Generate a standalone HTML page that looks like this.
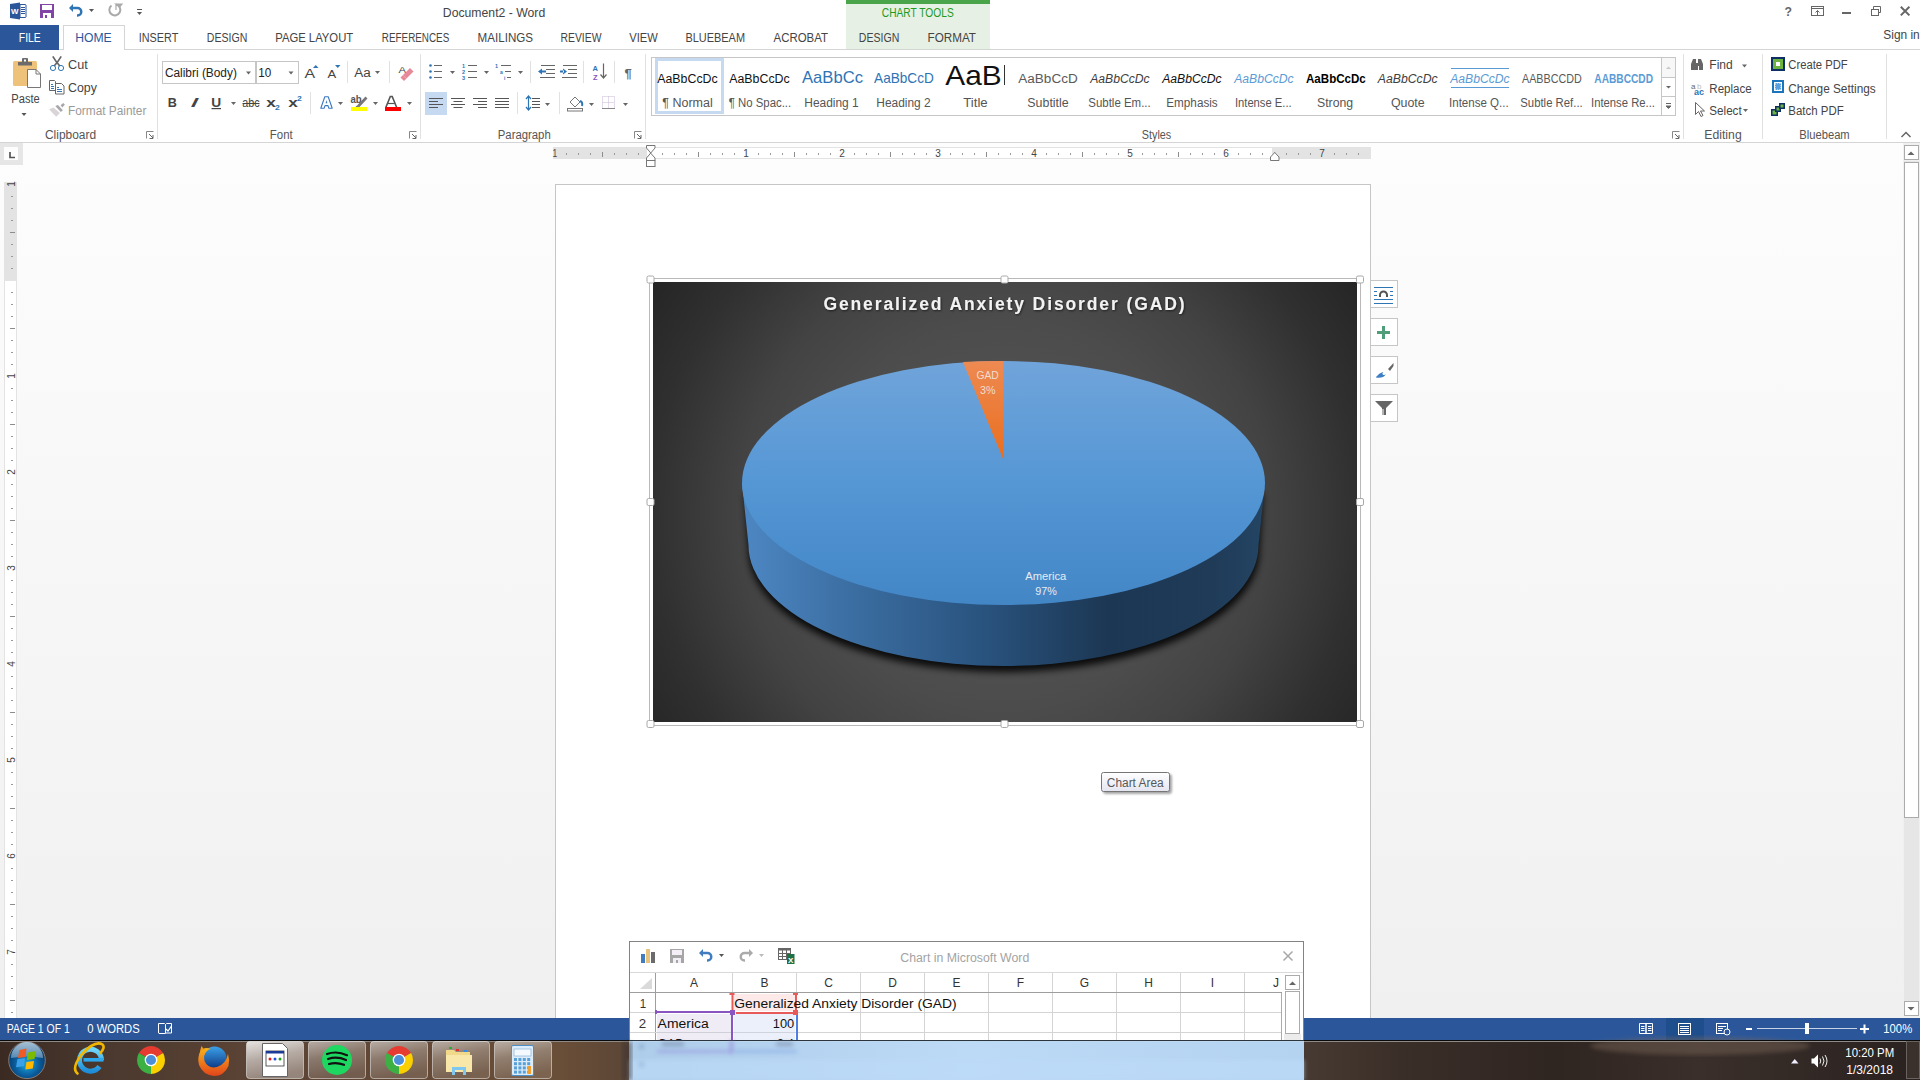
<!DOCTYPE html>
<html><head><meta charset="utf-8">
<style>
*{margin:0;padding:0;box-sizing:border-box}
html,body{width:1920px;height:1080px;overflow:hidden;background:#fff}
body{position:relative;font-family:"Liberation Sans",sans-serif}
.L{position:absolute;left:0;top:0}
text{font-family:"Liberation Sans",sans-serif;white-space:pre}
</style></head><body>

<svg class="L" style="z-index:1" width="1920" height="1080" viewBox="0 0 1920 1080"><rect x="0" y="0" width="1920" height="1080" fill="#ffffff" /><defs><linearGradient id="docbg" x1="0" y1="0" x2="0" y2="1"><stop offset="0" stop-color="#fdfdfd"/><stop offset="1" stop-color="#f0f0f0"/></linearGradient></defs><rect x="0" y="143" width="1920" height="875" fill="url(#docbg)" /><rect x="846" y="0" width="144" height="4" fill="#4aa54a" /><rect x="846" y="4" width="144" height="45" fill="#e6f0e4" /><rect x="0" y="49" width="1920" height="1" fill="#d5d5d5" /><rect x="0" y="25" width="59" height="25" fill="#2b579a" /><rect x="63" y="25" width="62" height="25" fill="#ffffff" /><rect x="63" y="25" width="1" height="25" fill="#d5d5d5" /><rect x="124" y="25" width="1" height="25" fill="#d5d5d5" /><rect x="63" y="25" width="62" height="1" fill="#d5d5d5" /><rect x="0" y="142" width="1920" height="1" fill="#d5d5d5" /><rect x="157" y="54" width="1" height="85" fill="#e1e1e1" /><rect x="420" y="54" width="1" height="85" fill="#e1e1e1" /><rect x="645" y="54" width="1" height="85" fill="#e1e1e1" /><rect x="1683" y="54" width="1" height="85" fill="#e1e1e1" /><rect x="1762" y="54" width="1" height="85" fill="#e1e1e1" /><rect x="1886" y="54" width="1" height="85" fill="#e1e1e1" /><text x="442.8" y="17" textLength="102.4" lengthAdjust="spacingAndGlyphs" font-size="12" fill="#444" font-weight="400" font-style="normal" >Document2 - Word</text><text x="18.8" y="41.5" textLength="22.0" lengthAdjust="spacingAndGlyphs" font-size="12.5" fill="#ffffff" font-weight="400" font-style="normal" >FILE</text><text x="75.2" y="41.5" textLength="36.5" lengthAdjust="spacingAndGlyphs" font-size="12.5" fill="#2b579a" font-weight="400" font-style="normal" >HOME</text><text x="138.8" y="41.5" textLength="39.5" lengthAdjust="spacingAndGlyphs" font-size="12.5" fill="#444" font-weight="400" font-style="normal" >INSERT</text><text x="206.8" y="41.5" textLength="40.5" lengthAdjust="spacingAndGlyphs" font-size="12.5" fill="#444" font-weight="400" font-style="normal" >DESIGN</text><text x="275.2" y="41.5" textLength="78.0" lengthAdjust="spacingAndGlyphs" font-size="12.5" fill="#444" font-weight="400" font-style="normal" >PAGE LAYOUT</text><text x="381.8" y="41.5" textLength="67.5" lengthAdjust="spacingAndGlyphs" font-size="12.5" fill="#444" font-weight="400" font-style="normal" >REFERENCES</text><text x="477.6" y="41.5" textLength="55.5" lengthAdjust="spacingAndGlyphs" font-size="12.5" fill="#444" font-weight="400" font-style="normal" >MAILINGS</text><text x="560.5" y="41.5" textLength="41.0" lengthAdjust="spacingAndGlyphs" font-size="12.5" fill="#444" font-weight="400" font-style="normal" >REVIEW</text><text x="629.2" y="41.5" textLength="28.5" lengthAdjust="spacingAndGlyphs" font-size="12.5" fill="#444" font-weight="400" font-style="normal" >VIEW</text><text x="685.5" y="41.5" textLength="59.5" lengthAdjust="spacingAndGlyphs" font-size="12.5" fill="#444" font-weight="400" font-style="normal" >BLUEBEAM</text><text x="773.5" y="41.5" textLength="54.5" lengthAdjust="spacingAndGlyphs" font-size="12.5" fill="#444" font-weight="400" font-style="normal" >ACROBAT</text><text x="858.8" y="41.5" textLength="40.5" lengthAdjust="spacingAndGlyphs" font-size="12.5" fill="#444" font-weight="400" font-style="normal" >DESIGN</text><text x="927.5" y="41.5" textLength="48.5" lengthAdjust="spacingAndGlyphs" font-size="12.5" fill="#444" font-weight="400" font-style="normal" >FORMAT</text><text x="881.8" y="17.3" textLength="71.9" lengthAdjust="spacingAndGlyphs" font-size="12" fill="#1f9a1f" font-weight="400" font-style="normal" >CHART TOOLS</text><text x="1883.3" y="38.5" textLength="36.4" lengthAdjust="spacingAndGlyphs" font-size="12" fill="#444" font-weight="400" font-style="normal" >Sign in</text></svg>
<svg class="L" style="z-index:2" width="1920" height="1080" viewBox="0 0 1920 1080"><path d="M20 4.5h5.5l0.5 0.5v12l-0.5 0.5h-5.5z" fill="#fff" stroke="#2b579a" stroke-width="1"/><path d="M21 7.5h4M21 9.5h4M21 11.5h4M21 13.5h4" stroke="#2b579a" stroke-width="1"/><path d="M10 4l10-1.5v17l-10-1.5z" fill="#2b579a"/><text x="11" y="14" font-size="7" font-weight="700" fill="#fff" textLength="7.5" lengthAdjust="spacingAndGlyphs">W</text><path d="M40 4h14v14h-14z" fill="#8344a8"/><rect x="42" y="5" width="10" height="5" fill="#fff"/><rect x="43" y="13" width="8" height="5" fill="#fff"/><rect x="45" y="15" width="2" height="3" fill="#8344a8"/><path d="M69 8l4-4v2.7h4.5a5 5 0 0 1 0 10h-0.5v-2.5h0.5a2.5 2.5 0 0 0 0-5h-4.5v2.8z" fill="#2e75b6"/><path d="M89 9h5l-2.5 3z" fill="#555"/><path d="M111.5 5.5a5.5 5.5 0 1 0 4.5-1" fill="none" stroke="#aaa" stroke-width="2"/><path d="M116 4h6l-2 2.5z M116 4v6" fill="#aaa" stroke="#aaa" stroke-width="1.2"/><path d="M137 9.5h5" stroke="#555" stroke-width="1"/><path d="M137 12h5l-2.5 3z" fill="#555"/><text x="1784.5" y="15.8" font-size="13" font-weight="700" fill="#666" textLength="7.5" lengthAdjust="spacingAndGlyphs">?</text><rect x="1811.5" y="6.5" width="12" height="9" fill="none" stroke="#666"/><path d="M1812 8.5h11" stroke="#666"/><path d="M1817.5 15v-4.5M1815.5 12.5l2-2 2 2" fill="none" stroke="#666"/><rect x="1842" y="12" width="9" height="2" fill="#666"/><rect x="1871.5" y="9.5" width="7" height="6" fill="none" stroke="#666"/><path d="M1873.5 9.5v-3h7v6h-2" fill="none" stroke="#666"/><path d="M1900.8 6.8l8.6 8.6M1909.4 6.8l-8.6 8.6" stroke="#666" stroke-width="2"/></svg>
<svg class="L" style="z-index:2" width="1920" height="1080" viewBox="0 0 1920 1080"><rect x="13" y="61" width="24" height="25" rx="1.5" fill="#eec27b"/><path d="M18 62h14v3.5h-14z" fill="#6b6b6b"/><rect x="22" y="58" width="6" height="5" rx="1" fill="#6b6b6b"/><rect x="24" y="59.5" width="2" height="2" fill="#fff"/><path d="M27.5 69.5h8.5l4.5 4.5v13.5h-13z" fill="#fff" stroke="#777" stroke-width="1"/><path d="M36 69.5v4.5h4.5" fill="none" stroke="#777" stroke-width="1"/><text x="11.3" y="103.3" textLength="28.4" lengthAdjust="spacingAndGlyphs" font-size="12" fill="#444" font-weight="400" font-style="normal" >Paste</text><path d="M21.5 113h5l-2.5 3z" fill="#555"/><path d="M52.8 56.3Q55.5 61 59.8 66M61.2 56.3Q58.5 61 54.2 66" fill="none" stroke="#666" stroke-width="1.7"/><circle cx="53" cy="68" r="2.6" fill="none" stroke="#2e75b6" stroke-width="1"/><circle cx="61" cy="68" r="2.6" fill="none" stroke="#2e75b6" stroke-width="1"/><text x="68.0" y="69.2" textLength="19.7" lengthAdjust="spacingAndGlyphs" font-size="12" fill="#444" font-weight="400" font-style="normal" >Cut</text><path d="M49.5 80.5h5l1 1v9h-6z" fill="#fff" stroke="#666"/><path d="M55.5 83.5h6l2.5 2.5v8h-8.5z" fill="#fff" stroke="#666"/><path d="M51 84.5h2M51 86.5h3M51 88.5h3M57 87.5h2M57 89.5h5M57 91.5h5" stroke="#2e75b6" stroke-width="1"/><text x="68.0" y="91.5" textLength="28.9" lengthAdjust="spacingAndGlyphs" font-size="12" fill="#444" font-weight="400" font-style="normal" >Copy</text><path d="M49.1 109.3L53.4 107.4 59.9 113 56.2 116.7z" fill="#d8d4d8"/><path d="M55.3 105.9L57.9 105 62.9 110.2 60.8 111.9z" fill="#a8a6aa"/><path d="M60.6 105.2L63.2 103 64.9 104.6 62.3 107.4z" fill="#a8a6aa"/><text x="68.0" y="114.9" textLength="78.4" lengthAdjust="spacingAndGlyphs" font-size="12" fill="#9a9a9a" font-weight="400" font-style="normal" >Format Painter</text><text x="45.0" y="138.5" textLength="51.1" lengthAdjust="spacingAndGlyphs" font-size="12" fill="#555" font-weight="400" font-style="normal" >Clipboard</text><path d="M146.5 138.5v-7h7" fill="none" stroke="#888" stroke-width="1"/><path d="M149 134l4 4M153 135v3.5h-3.5" fill="none" stroke="#666" stroke-width="1"/><path d="M409.5 138.5v-7h7" fill="none" stroke="#888" stroke-width="1"/><path d="M412 134l4 4M416 135v3.5h-3.5" fill="none" stroke="#666" stroke-width="1"/><path d="M634.5 138.5v-7h7" fill="none" stroke="#888" stroke-width="1"/><path d="M637 134l4 4M641 135v3.5h-3.5" fill="none" stroke="#666" stroke-width="1"/><path d="M1672.5 138.5v-7h7" fill="none" stroke="#888" stroke-width="1"/><path d="M1675 134l4 4M1679 135v3.5h-3.5" fill="none" stroke="#666" stroke-width="1"/><rect x="162.5" y="61.5" width="93" height="22" fill="#fff" stroke="#c6c6c6"/><rect x="256.5" y="61.5" width="42" height="22" fill="#fff" stroke="#c6c6c6"/><text x="164.9" y="77" textLength="72.0" lengthAdjust="spacingAndGlyphs" font-size="12.5" fill="#222" font-weight="400" font-style="normal" >Calibri (Body)</text><path d="M246 71.5h5l-2.5 3z" fill="#666"/><text x="258.2" y="77" textLength="13.0" lengthAdjust="spacingAndGlyphs" font-size="12.5" fill="#222" font-weight="400" font-style="normal" >10</text><path d="M288.5 71.5h5l-2.5 3z" fill="#666"/><text x="304.6" y="77.8" textLength="10.6" lengthAdjust="spacingAndGlyphs" font-size="13" fill="#444" font-weight="400" font-style="normal" >A</text><path d="M313 68h5.5l-2.75-3z" fill="#2e75b6"/><text x="327.6" y="77.8" textLength="8.7" lengthAdjust="spacingAndGlyphs" font-size="10.5" fill="#444" font-weight="400" font-style="normal" >A</text><path d="M335 65h5.5l-2.75 3z" fill="#2e75b6"/><rect x="347" y="61" width="1" height="22" fill="#e1e1e1" /><text x="354.2" y="76.5" textLength="16.5" lengthAdjust="spacingAndGlyphs" font-size="12.5" fill="#444" font-weight="400" font-style="normal" >Aa</text><path d="M375 71h5l-2.5 3z" fill="#666"/><rect x="389" y="61" width="1" height="22" fill="#e1e1e1" /><text x="398.5" y="72.5" textLength="7.6" lengthAdjust="spacingAndGlyphs" font-size="9" fill="#444" font-weight="400" font-style="normal" >A</text><path d="M403 75l7-7 3.5 3.5-7 7z" fill="#e8899b"/><path d="M400.5 77.5l2.5-2.5 3.5 3.5-2.5 2.5z" fill="#e8899b"/><text x="167.8" y="107.1" textLength="9.1" lengthAdjust="spacingAndGlyphs" font-size="12.5" fill="#444" font-weight="700" font-style="normal" >B</text><text x="189.8" y="107.1" textLength="9.5" lengthAdjust="spacingAndGlyphs" font-size="12.5" fill="#444" font-weight="400" font-style="italic" font-family="Liberation Serif">I</text><text x="211.3" y="107" textLength="9.9" lengthAdjust="spacingAndGlyphs" font-size="12" fill="#444" font-weight="700" font-style="normal" >U</text><rect x="211.5" y="108" width="9.5" height="1.2" fill="#444" /><path d="M231 102h5l-2.5 3z" fill="#666"/><text x="242.3" y="107" textLength="17.4" lengthAdjust="spacingAndGlyphs" font-size="12" fill="#444" font-weight="400" font-style="normal" >abc</text><rect x="242.5" y="103" width="17" height="1" fill="#444" /><text x="266.2" y="107" textLength="9.6" lengthAdjust="spacingAndGlyphs" font-size="13" fill="#444" font-weight="700" font-style="normal" >x</text><text x="275.1" y="109.5" textLength="4.8" lengthAdjust="spacingAndGlyphs" font-size="7" fill="#2e75b6" font-weight="700" font-style="normal" >2</text><text x="288.2" y="107" textLength="9.6" lengthAdjust="spacingAndGlyphs" font-size="13" fill="#444" font-weight="700" font-style="normal" >x</text><text x="297.1" y="100.5" textLength="4.8" lengthAdjust="spacingAndGlyphs" font-size="7" fill="#2e75b6" font-weight="700" font-style="normal" >2</text><rect x="310" y="92" width="1" height="22" fill="#e1e1e1" /><path d="M320.8 108.3L324.8 96.8H328.2L332.2 108.3H328.9L328 105.6H325L324.1 108.3Z" fill="#fff" stroke="#3a78c0" stroke-width="1.1" stroke-linejoin="round"/><path d="M325.6 103.2L326.5 100L327.4 103.2Z" fill="#3a78c0"/><path d="M338 102h5l-2.5 3z" fill="#666"/><text x="350.4" y="102.5" textLength="11.2" lengthAdjust="spacingAndGlyphs" font-size="10" fill="#555" font-weight="700" font-style="normal" >ab</text><path d="M357 105.5l8.5-9 2 2-8.5 9z" fill="#777"/><path d="M355.5 107l1.5-1.5 2 2-1.5 0.5z" fill="#666"/><rect x="351" y="107" width="16" height="4" fill="#ffff00" /><path d="M373 102h5l-2.5 3z" fill="#666"/><path d="M385.8 107.5L390.3 96.5H392.2L396.7 107.5" fill="none" stroke="#555" stroke-width="1.6"/><path d="M387.8 103.5h7" stroke="#555" stroke-width="1.2"/><rect x="385" y="107" width="16" height="4" fill="#ff0000" /><path d="M407 102h5l-2.5 3z" fill="#666"/><text x="269.8" y="138.5" textLength="22.9" lengthAdjust="spacingAndGlyphs" font-size="12" fill="#555" font-weight="400" font-style="normal" >Font</text><circle cx="430.5" cy="65.5" r="1.3" fill="#2e75b6"/><circle cx="430.5" cy="71.5" r="1.3" fill="#2e75b6"/><circle cx="430.5" cy="77.5" r="1.3" fill="#2e75b6"/><path d="M434 65.5h8M434 71.5h8M434 77.5h8" stroke="#666" stroke-width="1"/><path d="M450 71h5l-2.5 3z" fill="#666"/><text x="462" y="68" font-size="5.5" fill="#2e75b6" font-weight="700">1</text><text x="462" y="74" font-size="5.5" fill="#2e75b6" font-weight="700">2</text><text x="462" y="80" font-size="5.5" fill="#2e75b6" font-weight="700">3</text><path d="M468 65.5h9M468 71.5h9M468 77.5h9" stroke="#666" stroke-width="1"/><path d="M484 71h5l-2.5 3z" fill="#666"/><text x="495" y="68" font-size="5.5" fill="#2e75b6" font-weight="700">1</text><text x="500" y="74" font-size="5" fill="#2e75b6" font-weight="700">a</text><text x="504" y="80" font-size="5" fill="#2e75b6" font-weight="700">i</text><path d="M501 65.5h10M505 71.5h6M507 77.5h4" stroke="#666" stroke-width="1"/><path d="M518 71h5l-2.5 3z" fill="#666"/><rect x="530" y="61" width="1" height="22" fill="#e1e1e1" /><path d="M541 65.5h14M546 69.5h9M546 73.5h9M540 77.5h15" stroke="#666" stroke-width="1"/><path d="M538 71.5l4-3v6z M541 70.5h5v2h-5z" fill="#2e75b6"/><path d="M563 65.5h14M568 69.5h9M568 73.5h9M562 77.5h15" stroke="#666" stroke-width="1"/><path d="M567 71.5l-4-3v6z M560 70.5h4v2h-4z" fill="#2e75b6"/><rect x="583" y="61" width="1" height="22" fill="#e1e1e1" /><text x="592.5" y="71" font-size="7.5" fill="#2e75b6" font-weight="700">A</text><text x="593" y="79.5" font-size="7.5" fill="#8855bb" font-weight="700">Z</text><path d="M603.5 63.5v14M600.5 74.5l3 3.5 3-3.5" stroke="#666" stroke-width="1.2" fill="none"/><rect x="614" y="61" width="1" height="22" fill="#e1e1e1" /><text x="624.5" y="78" font-size="13" fill="#666" font-weight="700">¶</text><rect x="425" y="92" width="22" height="23" fill="#c5d9f1" /><rect x="429" y="98" width="14" height="1" fill="#555"/><rect x="429" y="101" width="9" height="1" fill="#555"/><rect x="429" y="104" width="14" height="1" fill="#555"/><rect x="429" y="107" width="9" height="1" fill="#555"/><rect x="451" y="98" width="14" height="1" fill="#555"/><rect x="453.5" y="101" width="9" height="1" fill="#555"/><rect x="451" y="104" width="14" height="1" fill="#555"/><rect x="453.5" y="107" width="9" height="1" fill="#555"/><rect x="473" y="98" width="14" height="1" fill="#555"/><rect x="478" y="101" width="9" height="1" fill="#555"/><rect x="473" y="104" width="14" height="1" fill="#555"/><rect x="478" y="107" width="9" height="1" fill="#555"/><rect x="495" y="98" width="14" height="1" fill="#555"/><rect x="495" y="101" width="14" height="1" fill="#555"/><rect x="495" y="104" width="14" height="1" fill="#555"/><rect x="495" y="107" width="14" height="1" fill="#555"/><rect x="517" y="92" width="1" height="22" fill="#e1e1e1" /><path d="M528.5 97v12M526 99l2.5-3 2.5 3M526 107l2.5 3 2.5-3" stroke="#2e75b6" stroke-width="1.2" fill="none"/><rect x="532" y="98" width="8" height="1" fill="#555"/><rect x="532" y="101" width="8" height="1" fill="#555"/><rect x="532" y="104" width="8" height="1" fill="#555"/><rect x="532" y="107" width="8" height="1" fill="#555"/><path d="M545 103h5l-2.5 3z" fill="#666"/><rect x="559" y="92" width="1" height="22" fill="#e1e1e1" /><path d="M570 102l5-5 5 5-5 5z" fill="#fff" stroke="#777"/><rect x="567.5" y="108.5" width="15" height="2.5" fill="#fff" stroke="#777"/><path d="M580 101q3 1 2 5" stroke="#2e75b6" stroke-width="2" fill="none"/><path d="M589 103h5l-2.5 3z" fill="#666"/><rect x="602.5" y="96.5" width="12" height="12" fill="none" stroke="#c8b8d8" stroke-dasharray="1 1"/><path d="M602.5 102.5h12M608.5 96.5v12" stroke="#c8b8d8" stroke-dasharray="1 1"/><path d="M602 108.5h13" stroke="#888"/><path d="M623 103h5l-2.5 3z" fill="#666"/><text x="497.8" y="138.5" textLength="52.9" lengthAdjust="spacingAndGlyphs" font-size="12" fill="#555" font-weight="400" font-style="normal" >Paragraph</text><rect x="651.5" y="57.5" width="1024" height="58" fill="#fff" stroke="#c6c6c6"/><rect x="656.5" y="59.5" width="66" height="53" fill="none" stroke="#c5d9f1" stroke-width="3"/><rect x="1661" y="57" width="1" height="58" fill="#c6c6c6" /><rect x="1661" y="77" width="15" height="1" fill="#c6c6c6" /><rect x="1661" y="96" width="15" height="1" fill="#c6c6c6" /><rect x="1662" y="58" width="13" height="19" fill="#f7f7f7" /><path d="M1666 69h5l-2.5-2.5z" fill="#c8c8c8"/><path d="M1666 86h5l-2.5 2.5z" fill="#666"/><path d="M1666 103.5h5M1666 106h5l-2.5 2.5z" stroke="#666" fill="#666" stroke-width="1"/><text x="657.2" y="83.3" textLength="60.5" lengthAdjust="spacingAndGlyphs" font-size="12.5" fill="#111" font-weight="400" font-style="normal" >AaBbCcDc</text><text x="662.3" y="106.9" textLength="50.4" lengthAdjust="spacingAndGlyphs" font-size="12" fill="#555" font-weight="400" font-style="normal" >¶ Normal</text><text x="729.2" y="83.3" textLength="60.5" lengthAdjust="spacingAndGlyphs" font-size="12.5" fill="#111" font-weight="400" font-style="normal" >AaBbCcDc</text><text x="728.8" y="106.9" textLength="62.4" lengthAdjust="spacingAndGlyphs" font-size="12" fill="#555" font-weight="400" font-style="normal" >¶ No Spac...</text><text x="802.0" y="83.3" textLength="61.0" lengthAdjust="spacingAndGlyphs" font-size="17" fill="#2e74b5" font-weight="400" font-style="normal" >AaBbCc</text><text x="804.3" y="106.9" textLength="54.4" lengthAdjust="spacingAndGlyphs" font-size="12" fill="#555" font-weight="400" font-style="normal" >Heading 1</text><text x="874.1" y="83.3" textLength="59.7" lengthAdjust="spacingAndGlyphs" font-size="14.5" fill="#2e74b5" font-weight="400" font-style="normal" >AaBbCcD</text><text x="876.3" y="106.9" textLength="54.4" lengthAdjust="spacingAndGlyphs" font-size="12" fill="#555" font-weight="400" font-style="normal" >Heading 2</text><text x="945.3" y="84.7" textLength="56.4" lengthAdjust="spacingAndGlyphs" font-size="28" fill="#111" font-weight="400" font-style="normal" >AaB</text><text x="963.3" y="106.9" textLength="24.4" lengthAdjust="spacingAndGlyphs" font-size="12" fill="#555" font-weight="400" font-style="normal" >Title</text><text x="1018.3" y="83.3" textLength="59.4" lengthAdjust="spacingAndGlyphs" font-size="12" fill="#5a5a5a" font-weight="400" font-style="normal" >AaBbCcD</text><text x="1027.3" y="106.9" textLength="41.4" lengthAdjust="spacingAndGlyphs" font-size="12" fill="#555" font-weight="400" font-style="normal" >Subtitle</text><text x="1090.2" y="83.3" textLength="59.5" lengthAdjust="spacingAndGlyphs" font-size="12.5" fill="#404040" font-weight="400" font-style="italic" >AaBbCcDc</text><text x="1088.3" y="106.9" textLength="62.4" lengthAdjust="spacingAndGlyphs" font-size="12" fill="#555" font-weight="400" font-style="normal" >Subtle Em...</text><text x="1162.2" y="83.3" textLength="59.5" lengthAdjust="spacingAndGlyphs" font-size="12.5" fill="#111" font-weight="400" font-style="italic" >AaBbCcDc</text><text x="1166.3" y="106.9" textLength="51.4" lengthAdjust="spacingAndGlyphs" font-size="12" fill="#555" font-weight="400" font-style="normal" >Emphasis</text><text x="1234.2" y="83.3" textLength="59.5" lengthAdjust="spacingAndGlyphs" font-size="12.5" fill="#5b9bd5" font-weight="400" font-style="italic" >AaBbCcDc</text><text x="1234.9" y="106.9" textLength="56.8" lengthAdjust="spacingAndGlyphs" font-size="12" fill="#555" font-weight="400" font-style="normal" >Intense E...</text><text x="1306.0" y="83.3" textLength="59.8" lengthAdjust="spacingAndGlyphs" font-size="12.5" fill="#000" font-weight="700" font-style="normal" >AaBbCcDc</text><text x="1317.0" y="106.9" textLength="36.2" lengthAdjust="spacingAndGlyphs" font-size="12" fill="#555" font-weight="400" font-style="normal" >Strong</text><text x="1377.8" y="83.3" textLength="59.9" lengthAdjust="spacingAndGlyphs" font-size="12.5" fill="#404040" font-weight="400" font-style="italic" >AaBbCcDc</text><text x="1390.9" y="106.9" textLength="33.8" lengthAdjust="spacingAndGlyphs" font-size="12" fill="#555" font-weight="400" font-style="normal" >Quote</text><text x="1450.2" y="83.3" textLength="59.5" lengthAdjust="spacingAndGlyphs" font-size="12.5" fill="#5b9bd5" font-weight="400" font-style="italic" >AaBbCcDc</text><text x="1449.0" y="106.9" textLength="59.7" lengthAdjust="spacingAndGlyphs" font-size="12" fill="#555" font-weight="400" font-style="normal" >Intense Q...</text><text x="1522.0" y="83.3" textLength="59.7" lengthAdjust="spacingAndGlyphs" font-size="12" fill="#595959" font-weight="400" font-style="normal" >AABBCCDD</text><text x="1520.3" y="106.9" textLength="62.4" lengthAdjust="spacingAndGlyphs" font-size="12" fill="#555" font-weight="400" font-style="normal" >Subtle Ref...</text><text x="1594.3" y="83.3" textLength="58.7" lengthAdjust="spacingAndGlyphs" font-size="12" fill="#5b9bd5" font-weight="700" font-style="normal" >AABBCCDD</text><text x="1591.0" y="106.9" textLength="64.0" lengthAdjust="spacingAndGlyphs" font-size="12" fill="#555" font-weight="400" font-style="normal" >Intense Re...</text><rect x="1451" y="68" width="58" height="1" fill="#5b9bd5" /><rect x="1451" y="87" width="58" height="1" fill="#5b9bd5" /><rect x="1004" y="65" width="1" height="20" fill="#333" /><text x="1141.8" y="138.7" textLength="29.4" lengthAdjust="spacingAndGlyphs" font-size="12" fill="#555" font-weight="400" font-style="normal" >Styles</text><path d="M1691 70v-6l2-5h3v4h2v-4h3l2 5v6h-4v-4h-1v4z" fill="#666"/><text x="1709.3" y="69.3" textLength="23.4" lengthAdjust="spacingAndGlyphs" font-size="12" fill="#444" font-weight="400" font-style="normal" >Find</text><path d="M1742 64.5h5l-2.5 3z" fill="#666"/><text x="1691" y="89" font-size="8" fill="#666">a</text><text x="1697" y="89" font-size="8" fill="#bbb">b</text><text x="1694" y="95" font-size="9" fill="#2e75b6" font-weight="700">ac</text><text x="1709.3" y="92.5" textLength="42.4" lengthAdjust="spacingAndGlyphs" font-size="12" fill="#444" font-weight="400" font-style="normal" >Replace</text><path d="M1695.5 102.5v12l3-3 2.5 5 2-1-2.5-4.5h4z" fill="#fff" stroke="#666"/><text x="1709.3" y="115.3" textLength="32.4" lengthAdjust="spacingAndGlyphs" font-size="12" fill="#444" font-weight="400" font-style="normal" >Select</text><path d="M1743 109h5l-2.5 3z" fill="#666"/><text x="1704.3" y="138.7" textLength="37.4" lengthAdjust="spacingAndGlyphs" font-size="12" fill="#555" font-weight="400" font-style="normal" >Editing</text><rect x="1771" y="57" width="14" height="14" fill="#0e2f66"/><rect x="1773" y="59" width="10" height="10" fill="#6cb33f"/><rect x="1776" y="62" width="4" height="4" fill="#fff"/><text x="1788.3" y="69.2" textLength="59.4" lengthAdjust="spacingAndGlyphs" font-size="12" fill="#444" font-weight="400" font-style="normal" >Create PDF</text><rect x="1772" y="80" width="12" height="13" fill="#1b75bc"/><rect x="1774" y="82" width="8" height="9" fill="#fff"/><rect x="1775" y="83" width="6" height="7" fill="#5aa0e0" stroke="#fff" stroke-dasharray="1 1"/><text x="1788.3" y="92.5" textLength="87.4" lengthAdjust="spacingAndGlyphs" font-size="12" fill="#444" font-weight="400" font-style="normal" >Change Settings</text><rect x="1771" y="109" width="7" height="7" fill="#0e2f66"/><rect x="1772.5" y="110.5" width="4" height="4" fill="#6cb33f"/><rect x="1775" y="106" width="6" height="6" fill="#0e2f66"/><rect x="1776.5" y="107.5" width="3" height="3" fill="#6cb33f"/><rect x="1779" y="103" width="6" height="6" fill="#0e2f66"/><rect x="1780.5" y="104.5" width="3" height="3" fill="#6cb33f"/><text x="1788.3" y="115.2" textLength="55.4" lengthAdjust="spacingAndGlyphs" font-size="12" fill="#444" font-weight="400" font-style="normal" >Batch PDF</text><text x="1799.3" y="138.5" textLength="50.4" lengthAdjust="spacingAndGlyphs" font-size="12" fill="#555" font-weight="400" font-style="normal" >Bluebeam</text><path d="M1901.5 137l4.5-4.5 4.5 4.5" fill="none" stroke="#666" stroke-width="1.5"/></svg>
<svg class="L" style="z-index:2" width="1920" height="1080" viewBox="0 0 1920 1080"><rect x="0" y="143" width="23" height="22" fill="#e6e6e6" /><rect x="4" y="147" width="14" height="13" fill="#fdfdfd" /><path d="M10 152v5.5h5" fill="none" stroke="#555" stroke-width="1.7"/><rect x="553" y="147" width="818" height="12" fill="#e3e3e3" /><rect x="647" y="147" width="625" height="12" fill="#ffffff" /><rect x="647" y="147" width="625" height="1" fill="#e3e3e3" /><rect x="647" y="158" width="625" height="1" fill="#e3e3e3" /><rect x="566" y="153" width="1" height="2" fill="#9a9a9a" /><rect x="578" y="153" width="1" height="2" fill="#9a9a9a" /><rect x="590" y="153" width="1" height="2" fill="#9a9a9a" /><rect x="602" y="152" width="1" height="5" fill="#8c8c8c" /><rect x="614" y="153" width="1" height="2" fill="#9a9a9a" /><rect x="626" y="153" width="1" height="2" fill="#9a9a9a" /><rect x="638" y="153" width="1" height="2" fill="#9a9a9a" /><rect x="662" y="153" width="1" height="2" fill="#9a9a9a" /><rect x="674" y="153" width="1" height="2" fill="#9a9a9a" /><rect x="686" y="153" width="1" height="2" fill="#9a9a9a" /><rect x="698" y="152" width="1" height="5" fill="#8c8c8c" /><rect x="710" y="153" width="1" height="2" fill="#9a9a9a" /><rect x="722" y="153" width="1" height="2" fill="#9a9a9a" /><rect x="734" y="153" width="1" height="2" fill="#9a9a9a" /><rect x="758" y="153" width="1" height="2" fill="#9a9a9a" /><rect x="770" y="153" width="1" height="2" fill="#9a9a9a" /><rect x="782" y="153" width="1" height="2" fill="#9a9a9a" /><rect x="794" y="152" width="1" height="5" fill="#8c8c8c" /><rect x="806" y="153" width="1" height="2" fill="#9a9a9a" /><rect x="818" y="153" width="1" height="2" fill="#9a9a9a" /><rect x="830" y="153" width="1" height="2" fill="#9a9a9a" /><rect x="854" y="153" width="1" height="2" fill="#9a9a9a" /><rect x="866" y="153" width="1" height="2" fill="#9a9a9a" /><rect x="878" y="153" width="1" height="2" fill="#9a9a9a" /><rect x="890" y="152" width="1" height="5" fill="#8c8c8c" /><rect x="902" y="153" width="1" height="2" fill="#9a9a9a" /><rect x="914" y="153" width="1" height="2" fill="#9a9a9a" /><rect x="926" y="153" width="1" height="2" fill="#9a9a9a" /><rect x="950" y="153" width="1" height="2" fill="#9a9a9a" /><rect x="962" y="153" width="1" height="2" fill="#9a9a9a" /><rect x="974" y="153" width="1" height="2" fill="#9a9a9a" /><rect x="986" y="152" width="1" height="5" fill="#8c8c8c" /><rect x="998" y="153" width="1" height="2" fill="#9a9a9a" /><rect x="1010" y="153" width="1" height="2" fill="#9a9a9a" /><rect x="1022" y="153" width="1" height="2" fill="#9a9a9a" /><rect x="1046" y="153" width="1" height="2" fill="#9a9a9a" /><rect x="1058" y="153" width="1" height="2" fill="#9a9a9a" /><rect x="1070" y="153" width="1" height="2" fill="#9a9a9a" /><rect x="1082" y="152" width="1" height="5" fill="#8c8c8c" /><rect x="1094" y="153" width="1" height="2" fill="#9a9a9a" /><rect x="1106" y="153" width="1" height="2" fill="#9a9a9a" /><rect x="1118" y="153" width="1" height="2" fill="#9a9a9a" /><rect x="1142" y="153" width="1" height="2" fill="#9a9a9a" /><rect x="1154" y="153" width="1" height="2" fill="#9a9a9a" /><rect x="1166" y="153" width="1" height="2" fill="#9a9a9a" /><rect x="1178" y="152" width="1" height="5" fill="#8c8c8c" /><rect x="1190" y="153" width="1" height="2" fill="#9a9a9a" /><rect x="1202" y="153" width="1" height="2" fill="#9a9a9a" /><rect x="1214" y="153" width="1" height="2" fill="#9a9a9a" /><rect x="1238" y="153" width="1" height="2" fill="#9a9a9a" /><rect x="1250" y="153" width="1" height="2" fill="#9a9a9a" /><rect x="1262" y="153" width="1" height="2" fill="#9a9a9a" /><rect x="1274" y="152" width="1" height="5" fill="#8c8c8c" /><rect x="1286" y="153" width="1" height="2" fill="#9a9a9a" /><rect x="1298" y="153" width="1" height="2" fill="#9a9a9a" /><rect x="1310" y="153" width="1" height="2" fill="#9a9a9a" /><rect x="1334" y="153" width="1" height="2" fill="#9a9a9a" /><rect x="1346" y="153" width="1" height="2" fill="#9a9a9a" /><rect x="1358" y="153" width="1" height="2" fill="#9a9a9a" /><text x="552.4" y="157" textLength="4.7" lengthAdjust="spacingAndGlyphs" font-size="10" fill="#444" font-weight="400" font-style="normal" >1</text><text x="746" y="157" font-size="10" fill="#444" text-anchor="middle">1</text><text x="842" y="157" font-size="10" fill="#444" text-anchor="middle">2</text><text x="938" y="157" font-size="10" fill="#444" text-anchor="middle">3</text><text x="1034" y="157" font-size="10" fill="#444" text-anchor="middle">4</text><text x="1130" y="157" font-size="10" fill="#444" text-anchor="middle">5</text><text x="1226" y="157" font-size="10" fill="#444" text-anchor="middle">6</text><text x="1322" y="157" font-size="10" fill="#444" text-anchor="middle">7</text><path d="M646.5 145.5h8.5v2.5l-4.25 5 -0.25 0 4.5 5v2.5h-8.5v-2.5l4.25-5 -4.25-5z" fill="#fff" stroke="#777" stroke-width="1"/><rect x="646.5" y="160.5" width="8.5" height="6" fill="#fff" stroke="#777"/><path d="M1270.5 160.5v-3.5l4.25-4.5 4.25 4.5v3.5z" fill="#fff" stroke="#777"/><rect x="4" y="182" width="13" height="836" fill="#ffffff" /><rect x="4" y="182" width="1" height="836" fill="#e3e3e3" /><rect x="16" y="182" width="1" height="836" fill="#e3e3e3" /><rect x="4" y="182" width="13" height="99" fill="#e3e3e3" /><rect x="11" y="196" width="2" height="1" fill="#9a9a9a" /><rect x="11" y="208" width="2" height="1" fill="#9a9a9a" /><rect x="11" y="220" width="2" height="1" fill="#9a9a9a" /><rect x="10" y="232" width="5" height="1" fill="#8c8c8c" /><rect x="11" y="244" width="2" height="1" fill="#9a9a9a" /><rect x="11" y="256" width="2" height="1" fill="#9a9a9a" /><rect x="11" y="268" width="2" height="1" fill="#9a9a9a" /><rect x="11" y="292" width="2" height="1" fill="#9a9a9a" /><rect x="11" y="304" width="2" height="1" fill="#9a9a9a" /><rect x="11" y="316" width="2" height="1" fill="#9a9a9a" /><rect x="10" y="328" width="5" height="1" fill="#8c8c8c" /><rect x="11" y="340" width="2" height="1" fill="#9a9a9a" /><rect x="11" y="352" width="2" height="1" fill="#9a9a9a" /><rect x="11" y="364" width="2" height="1" fill="#9a9a9a" /><rect x="11" y="388" width="2" height="1" fill="#9a9a9a" /><rect x="11" y="400" width="2" height="1" fill="#9a9a9a" /><rect x="11" y="412" width="2" height="1" fill="#9a9a9a" /><rect x="10" y="424" width="5" height="1" fill="#8c8c8c" /><rect x="11" y="436" width="2" height="1" fill="#9a9a9a" /><rect x="11" y="448" width="2" height="1" fill="#9a9a9a" /><rect x="11" y="460" width="2" height="1" fill="#9a9a9a" /><rect x="11" y="484" width="2" height="1" fill="#9a9a9a" /><rect x="11" y="496" width="2" height="1" fill="#9a9a9a" /><rect x="11" y="508" width="2" height="1" fill="#9a9a9a" /><rect x="10" y="520" width="5" height="1" fill="#8c8c8c" /><rect x="11" y="532" width="2" height="1" fill="#9a9a9a" /><rect x="11" y="544" width="2" height="1" fill="#9a9a9a" /><rect x="11" y="556" width="2" height="1" fill="#9a9a9a" /><rect x="11" y="580" width="2" height="1" fill="#9a9a9a" /><rect x="11" y="592" width="2" height="1" fill="#9a9a9a" /><rect x="11" y="604" width="2" height="1" fill="#9a9a9a" /><rect x="10" y="616" width="5" height="1" fill="#8c8c8c" /><rect x="11" y="628" width="2" height="1" fill="#9a9a9a" /><rect x="11" y="640" width="2" height="1" fill="#9a9a9a" /><rect x="11" y="652" width="2" height="1" fill="#9a9a9a" /><rect x="11" y="676" width="2" height="1" fill="#9a9a9a" /><rect x="11" y="688" width="2" height="1" fill="#9a9a9a" /><rect x="11" y="700" width="2" height="1" fill="#9a9a9a" /><rect x="10" y="712" width="5" height="1" fill="#8c8c8c" /><rect x="11" y="724" width="2" height="1" fill="#9a9a9a" /><rect x="11" y="736" width="2" height="1" fill="#9a9a9a" /><rect x="11" y="748" width="2" height="1" fill="#9a9a9a" /><rect x="11" y="772" width="2" height="1" fill="#9a9a9a" /><rect x="11" y="784" width="2" height="1" fill="#9a9a9a" /><rect x="11" y="796" width="2" height="1" fill="#9a9a9a" /><rect x="10" y="808" width="5" height="1" fill="#8c8c8c" /><rect x="11" y="820" width="2" height="1" fill="#9a9a9a" /><rect x="11" y="832" width="2" height="1" fill="#9a9a9a" /><rect x="11" y="844" width="2" height="1" fill="#9a9a9a" /><rect x="11" y="868" width="2" height="1" fill="#9a9a9a" /><rect x="11" y="880" width="2" height="1" fill="#9a9a9a" /><rect x="11" y="892" width="2" height="1" fill="#9a9a9a" /><rect x="10" y="904" width="5" height="1" fill="#8c8c8c" /><rect x="11" y="916" width="2" height="1" fill="#9a9a9a" /><rect x="11" y="928" width="2" height="1" fill="#9a9a9a" /><rect x="11" y="940" width="2" height="1" fill="#9a9a9a" /><rect x="11" y="964" width="2" height="1" fill="#9a9a9a" /><rect x="11" y="976" width="2" height="1" fill="#9a9a9a" /><rect x="11" y="988" width="2" height="1" fill="#9a9a9a" /><rect x="10" y="1000" width="5" height="1" fill="#8c8c8c" /><rect x="11" y="1012" width="2" height="1" fill="#9a9a9a" /><text x="0" y="0" font-size="10" fill="#444" text-anchor="middle" transform="translate(15.3,184) rotate(-90)">1</text><text x="0" y="0" font-size="10" fill="#444" text-anchor="middle" transform="translate(15.3,376) rotate(-90)">1</text><text x="0" y="0" font-size="10" fill="#444" text-anchor="middle" transform="translate(15.3,472) rotate(-90)">2</text><text x="0" y="0" font-size="10" fill="#444" text-anchor="middle" transform="translate(15.3,568) rotate(-90)">3</text><text x="0" y="0" font-size="10" fill="#444" text-anchor="middle" transform="translate(15.3,664) rotate(-90)">4</text><text x="0" y="0" font-size="10" fill="#444" text-anchor="middle" transform="translate(15.3,760) rotate(-90)">5</text><text x="0" y="0" font-size="10" fill="#444" text-anchor="middle" transform="translate(15.3,856) rotate(-90)">6</text><text x="0" y="0" font-size="10" fill="#444" text-anchor="middle" transform="translate(15.3,952) rotate(-90)">7</text><rect x="1903" y="143" width="17" height="875" fill="#f0f0f0" /><rect x="1904.5" y="145.5" width="14" height="14" fill="#fff" stroke="#ababab"/><path d="M1907.5 155h7l-3.5-3.5z" fill="#666"/><rect x="1904" y="161" width="15" height="840" fill="#e6e6e6" /><rect x="1904.5" y="162.5" width="14" height="655" fill="#fff" stroke="#ababab"/><rect x="1904.5" y="1001.5" width="14" height="14" fill="#fff" stroke="#ababab"/><path d="M1907.5 1007h7l-3.5 3.5z" fill="#666"/></svg>
<svg class="L" style="z-index:3" width="1920" height="1080" viewBox="0 0 1920 1080"><rect x="555.5" y="184.5" width="815" height="900" fill="#fff" stroke="#c6c6c6"/><rect x="649.5" y="278.5" width="711" height="447" fill="#fff" stroke="#b9b9b9"/><defs>
<radialGradient id="cbg" gradientUnits="userSpaceOnUse" cx="1005" cy="515" r="430">
<stop offset="0" stop-color="#585858"/><stop offset="0.45" stop-color="#4c4c4c"/><stop offset="0.62" stop-color="#434343"/><stop offset="0.82" stop-color="#303030"/><stop offset="1" stop-color="#242424"/></radialGradient>
<linearGradient id="ptop" x1="0" y1="0" x2="0" y2="1"><stop offset="0" stop-color="#70a4da"/><stop offset="0.5" stop-color="#5597d5"/><stop offset="1" stop-color="#4386c6"/></linearGradient>
<linearGradient id="pside" x1="0" y1="0" x2="1" y2="0">
<stop offset="0" stop-color="#4d87c3"/><stop offset="0.2" stop-color="#3c6fa3"/><stop offset="0.45" stop-color="#2a5480"/><stop offset="0.7" stop-color="#1c3753"/><stop offset="0.9" stop-color="#1f3b58"/><stop offset="1" stop-color="#244564"/></linearGradient>
<linearGradient id="otop" x1="0" y1="0" x2="0" y2="1"><stop offset="0" stop-color="#ee8a52"/><stop offset="1" stop-color="#e96e1e"/></linearGradient>
<filter id="blur6" x="-20%" y="-30%" width="140%" height="160%"><feGaussianBlur stdDeviation="3.5"/></filter>
<filter id="tsh" x="-5%" y="-30%" width="110%" height="160%"><feDropShadow dx="0.8" dy="1" stdDeviation="0.8" flood-color="#000" flood-opacity="0.6"/></filter>
</defs><rect x="653" y="282" width="704" height="440" fill="url(#cbg)"/><path d="M745 490 L748.5 548 A255 121 0 0 0 1259.5 548 L1263 490 Z" fill="#000" opacity="0.85" filter="url(#blur6)" transform="translate(0,3)"/><path d="M742 483 L1265 483 L1258.5 545 A255 121 0 0 1 748.5 545 Z" fill="url(#pside)"/><ellipse cx="1003.5" cy="483" rx="261.5" ry="122" fill="url(#ptop)"/><path d="M1003.5 460 L963 362 A261.5 122 0 0 1 1003.5 361 Z" fill="url(#otop)"/><g filter="url(#tsh)"><text x="823.4" y="310" textLength="361.1" lengthAdjust="spacing" font-size="17.5" fill="#f2f2f2" font-weight="700" font-style="normal" >Generalized Anxiety Disorder (GAD)</text></g><text x="976.5" y="379" textLength="22.3" lengthAdjust="spacingAndGlyphs" font-size="11" fill="#f2dccc" font-weight="400" font-style="normal" >GAD</text><text x="980.1" y="394" textLength="15.5" lengthAdjust="spacingAndGlyphs" font-size="11" fill="#f2dccc" font-weight="400" font-style="normal" >3%</text><text x="1025.3" y="580.1" textLength="41.0" lengthAdjust="spacingAndGlyphs" font-size="11" fill="#e8ecf2" font-weight="400" font-style="normal" >America</text><text x="1035.3" y="595" textLength="21.6" lengthAdjust="spacingAndGlyphs" font-size="11" fill="#e8ecf2" font-weight="400" font-style="normal" >97%</text><rect x="647.0" y="276.0" width="7" height="7" rx="1.5" fill="#fff" stroke="#a9a9a9"/><rect x="1001.0" y="276.0" width="7" height="7" rx="1.5" fill="#fff" stroke="#a9a9a9"/><rect x="1356.5" y="276.0" width="7" height="7" rx="1.5" fill="#fff" stroke="#a9a9a9"/><rect x="647.0" y="498.5" width="7" height="7" rx="1.5" fill="#fff" stroke="#a9a9a9"/><rect x="1356.5" y="498.5" width="7" height="7" rx="1.5" fill="#fff" stroke="#a9a9a9"/><rect x="647.0" y="720.5" width="7" height="7" rx="1.5" fill="#fff" stroke="#a9a9a9"/><rect x="1001.0" y="720.5" width="7" height="7" rx="1.5" fill="#fff" stroke="#a9a9a9"/><rect x="1356.5" y="720.5" width="7" height="7" rx="1.5" fill="#fff" stroke="#a9a9a9"/><rect x="1370.5" y="280.5" width="27" height="27" fill="#fff" stroke="#c6c6c6"/><rect x="1370.5" y="318.5" width="27" height="27" fill="#fff" stroke="#c6c6c6"/><rect x="1370.5" y="356.5" width="27" height="27" fill="#fff" stroke="#c6c6c6"/><rect x="1370.5" y="394.5" width="27" height="27" fill="#fff" stroke="#c6c6c6"/><path d="M1374 287.5h19M1374 303.5h19M1374 299.5h19" stroke="#2e75b6" stroke-width="1"/><path d="M1374 291.5h3M1390 291.5h3M1374 295.5h3M1390 295.5h3" stroke="#2e75b6" stroke-width="1"/><path d="M1380 297v-2a3.5 3.5 0 0 1 7 0v2" fill="none" stroke="#555" stroke-width="2"/><path d="M1383.5 326v13M1377 332.5h13" stroke="#4f9e79" stroke-width="3"/><path d="M1388 369l5.5-6v3l-3.5 5z" fill="#666"/><path d="M1376 377q3 -4 7 -5l2.5 2.5q-2 4 -9.5 3z" fill="#3d7fc4"/><circle cx="1384" cy="373.5" r="1.5" fill="#fff"/><path d="M1375 401h18l-7 7v7h-4v-7z" fill="#666"/><path d="M1383 409v6" stroke="#fff" stroke-width="1"/><defs><linearGradient id="ttg" x1="0" y1="0" x2="0" y2="1"><stop offset="0" stop-color="#ffffff"/><stop offset="1" stop-color="#e4e5f0"/></linearGradient><filter id="ttsh" x="-20%" y="-50%" width="150%" height="220%"><feDropShadow dx="2" dy="2" stdDeviation="1.2" flood-color="#000" flood-opacity="0.35"/></filter></defs><rect x="1101.5" y="772.5" width="68" height="19" rx="2" fill="url(#ttg)" stroke="#767676" filter="url(#ttsh)"/><text x="1106.8" y="786.5" textLength="56.9" lengthAdjust="spacingAndGlyphs" font-size="12" fill="#575757" font-weight="400" font-style="normal" >Chart Area</text></svg>
<svg class="L" style="z-index:3" width="1920" height="1080" viewBox="0 0 1920 1080"><rect x="0" y="1018" width="1920" height="22" fill="#2b579a" /><text x="6.8" y="1033.3" textLength="62.9" lengthAdjust="spacingAndGlyphs" font-size="12" fill="#fff" font-weight="400" font-style="normal" >PAGE 1 OF 1</text><text x="87.3" y="1033.3" textLength="52.4" lengthAdjust="spacingAndGlyphs" font-size="12" fill="#fff" font-weight="400" font-style="normal" >0 WORDS</text><path d="M158.5 1023.5h6l1 1v9h-6.5l-0.5-0.5z M165.5 1024.5l1-1h5v9.5h-5.5" fill="none" stroke="#fff" stroke-width="1"/><path d="M166 1029l2 2 3.5-5" fill="none" stroke="#fff" stroke-width="1.2"/><rect x="1666" y="1018" width="38" height="22" fill="#1f4e8c" /><path d="M1639.5 1023.5h6.5v10h-6.5z M1646 1023.5h6.5v10h-6.5z" fill="none" stroke="#fff"/><path d="M1641 1026.5h3.5M1641 1028.5h3.5M1641 1030.5h3.5M1648 1026.5h3.5M1648 1028.5h3.5M1648 1030.5h3.5" stroke="#fff"/><rect x="1678.5" y="1023.5" width="12" height="11" fill="none" stroke="#fff"/><path d="M1680 1026.5h9M1680 1028.5h9M1680 1030.5h9M1680 1032.5h9" stroke="#fff"/><rect x="1716.5" y="1023.5" width="11" height="10" fill="none" stroke="#fff"/><path d="M1718 1026.5h8M1718 1028.5h5M1718 1030.5h4" stroke="#fff"/><circle cx="1727" cy="1032" r="3" fill="#2b579a" stroke="#fff"/><rect x="1746" y="1028" width="6" height="2" fill="#fff" /><rect x="1757" y="1028" width="100" height="1" fill="#c8d4e6" /><rect x="1805" y="1023" width="4" height="11" fill="#fff" /><rect x="1860" y="1028" width="9" height="2" fill="#fff" /><rect x="1863.5" y="1024.5" width="2" height="9" fill="#fff" /><text x="1883.3" y="1033.3" textLength="28.9" lengthAdjust="spacingAndGlyphs" font-size="12" fill="#fff" font-weight="400" font-style="normal" >100%</text></svg>
<svg class="L" style="z-index:4" width="1920" height="1080" viewBox="0 0 1920 1080"><rect x="629.5" y="941.5" width="674" height="200" fill="#fff" stroke="#838383"/><rect x="641" y="954" width="4" height="9" fill="#3f7cc0" /><rect x="646" y="949" width="4" height="14" fill="#e9c27e" /><rect x="651" y="952" width="4" height="11" fill="#6b6b6b" /><path d="M670 949h14v14h-14z" fill="#a6a6a6"/><rect x="672" y="950" width="10" height="5" fill="#f4eff6"/><rect x="673" y="958" width="8" height="5" fill="#f4eff6"/><rect x="676" y="960" width="2" height="3" fill="#a6a6a6"/><path d="M699 953l4-4v2.7h4.5a5 5 0 0 1 0 10h-0.5v-2.5h0.5a2.5 2.5 0 0 0 0-5h-4.5v2.8z" fill="#3f7cc0"/><path d="M719 954h5l-2.5 3z" fill="#555"/><path d="M753 953l-4-4v2.7h-4.5a5 5 0 0 0 0 10h0.5v-2.5h-0.5a2.5 2.5 0 0 1 0-5h4.5v2.8z" fill="#aaaaaa"/><path d="M759 954h5l-2.5 3z" fill="#bbb"/><rect x="778.5" y="948.5" width="12" height="11" fill="#fff" stroke="#666"/><rect x="778" y="948" width="13" height="2.5" fill="#666"/><path d="M778.5 953.5h12M778.5 956.5h12M782.5 950v10M786.5 950v10" stroke="#666" stroke-width="1"/><rect x="787" y="954" width="7.5" height="10" fill="#1f7145"/><text x="788" y="962.5" font-size="8" font-weight="700" fill="#fff">X</text><text x="900.3" y="962" textLength="129.0" lengthAdjust="spacingAndGlyphs" font-size="12" fill="#a3a3a3" font-weight="400" font-style="normal" >Chart in Microsoft Word</text><path d="M1283.5 951.5l9 9M1292.5 951.5l-9 9" stroke="#a8a8a8" stroke-width="1.5"/><rect x="630" y="972" width="673" height="1" fill="#d9d9d9" /><rect x="732" y="973" width="1" height="20" fill="#d4d4d4" /><rect x="796" y="973" width="1" height="20" fill="#d4d4d4" /><rect x="860" y="973" width="1" height="20" fill="#d4d4d4" /><rect x="924" y="973" width="1" height="20" fill="#d4d4d4" /><rect x="988" y="973" width="1" height="20" fill="#d4d4d4" /><rect x="1052" y="973" width="1" height="20" fill="#d4d4d4" /><rect x="1116" y="973" width="1" height="20" fill="#d4d4d4" /><rect x="1180" y="973" width="1" height="20" fill="#d4d4d4" /><rect x="1244" y="973" width="1" height="20" fill="#d4d4d4" /><rect x="630" y="992" width="652" height="1" fill="#9e9e9e" /><rect x="655" y="973" width="1" height="70" fill="#9e9e9e" /><text x="694.0" y="987.3" font-size="12" fill="#333" text-anchor="middle">A</text><text x="764.5" y="987.3" font-size="12" fill="#333" text-anchor="middle">B</text><text x="828.5" y="987.3" font-size="12" fill="#333" text-anchor="middle">C</text><text x="892.5" y="987.3" font-size="12" fill="#333" text-anchor="middle">D</text><text x="956.5" y="987.3" font-size="12" fill="#333" text-anchor="middle">E</text><text x="1020.5" y="987.3" font-size="12" fill="#333" text-anchor="middle">F</text><text x="1084.5" y="987.3" font-size="12" fill="#333" text-anchor="middle">G</text><text x="1148.5" y="987.3" font-size="12" fill="#333" text-anchor="middle">H</text><text x="1212.5" y="987.3" font-size="12" fill="#333" text-anchor="middle">I</text><text x="1276" y="987.3" font-size="12" fill="#333" text-anchor="middle">J</text><path d="M640 989h12v-11z" fill="#dadada"/><rect x="630" y="1012" width="652" height="1" fill="#d4d4d4" /><rect x="630" y="1032" width="652" height="1" fill="#d4d4d4" /><rect x="732" y="993" width="1" height="50" fill="#d4d4d4" /><rect x="796" y="993" width="1" height="50" fill="#d4d4d4" /><rect x="860" y="993" width="1" height="50" fill="#d4d4d4" /><rect x="924" y="993" width="1" height="50" fill="#d4d4d4" /><rect x="988" y="993" width="1" height="50" fill="#d4d4d4" /><rect x="1052" y="993" width="1" height="50" fill="#d4d4d4" /><rect x="1116" y="993" width="1" height="50" fill="#d4d4d4" /><rect x="1180" y="993" width="1" height="50" fill="#d4d4d4" /><rect x="1244" y="993" width="1" height="50" fill="#d4d4d4" /><rect x="1281" y="993" width="1" height="50" fill="#d4d4d4" /><rect x="1281" y="993" width="1" height="50" fill="#ababab" /><text x="639.8" y="1008.3" textLength="6.4" lengthAdjust="spacingAndGlyphs" font-size="12" fill="#333" font-weight="400" font-style="normal" >1</text><text x="638.8" y="1028.3" textLength="7.4" lengthAdjust="spacingAndGlyphs" font-size="12" fill="#333" font-weight="400" font-style="normal" >2</text><rect x="734" y="994" width="61" height="17" fill="#fce9e8" /><rect x="657" y="1014" width="74" height="30" fill="#f0ecf6" /><rect x="734" y="1014" width="61" height="30" fill="#ebf0fa" /><rect x="657" y="1032" width="74" height="1" fill="#cfcfd8" /><rect x="734" y="1032" width="61" height="1" fill="#cfd4dc" /><rect x="731.5" y="995" width="2" height="15" fill="#e85a5a" /><rect x="795" y="995" width="2" height="15" fill="#e85a5a" /><rect x="736" y="1012" width="58" height="2" fill="#e85a5a" /><rect x="729.5" y="993" width="5" height="2" fill="#e85a5a" /><rect x="793" y="993" width="5" height="2" fill="#e85a5a" /><rect x="793" y="1010" width="5" height="5" fill="#e85a5a" /><rect x="657" y="1011" width="73" height="2" fill="#8a55c0" /><rect x="655" y="1010" width="2" height="4" fill="#8a55c0" /><rect x="730" y="1010" width="5" height="5" fill="#8a55c0" /><rect x="731" y="1015" width="2" height="30" fill="#8a55c0" /><rect x="796" y="1015" width="2" height="30" fill="#4f7fe0" /><text x="734.3" y="1008.3" textLength="222.4" lengthAdjust="spacingAndGlyphs" font-size="12" fill="#111" font-weight="400" font-style="normal" >Generalized Anxiety Disorder (GAD)</text><text x="657.6" y="1028.3" textLength="51.1" lengthAdjust="spacingAndGlyphs" font-size="12" fill="#111" font-weight="400" font-style="normal" >America</text><text x="772.8" y="1028.3" textLength="21.4" lengthAdjust="spacingAndGlyphs" font-size="12" fill="#111" font-weight="400" font-style="normal" >100</text><text x="657.6" y="1048" textLength="26.4" lengthAdjust="spacingAndGlyphs" font-size="12" fill="#111" font-weight="400" font-style="normal" >GAD</text><text x="777.3" y="1048" textLength="16.4" lengthAdjust="spacingAndGlyphs" font-size="12" fill="#111" font-weight="400" font-style="normal" >3.4</text><rect x="1284" y="1034" width="17" height="10" fill="#ececec" /><rect x="1285.5" y="975.5" width="14" height="14" fill="#fff" stroke="#ababab"/><path d="M1289 985h7l-3.5-3.5z" fill="#666"/><rect x="1285.5" y="991.5" width="14" height="42" fill="#fff" stroke="#ababab"/></svg>
<svg class="L" style="z-index:5" width="1920" height="1080" viewBox="0 0 1920 1080"><defs>
<linearGradient id="tbg" x1="0" y1="0" x2="1" y2="0">
<stop offset="0" stop-color="#3a2a22"/><stop offset="0.052" stop-color="#4a382e"/><stop offset="0.125" stop-color="#5a4234"/><stop offset="0.29" stop-color="#6a4f38"/><stop offset="0.33" stop-color="#5a4536"/>
<stop offset="0.68" stop-color="#463a32"/><stop offset="0.73" stop-color="#3a2e28"/><stop offset="0.81" stop-color="#2f2521"/><stop offset="0.885" stop-color="#3a2f2a"/><stop offset="1" stop-color="#2a2220"/></linearGradient>
<linearGradient id="btn" x1="0" y1="0" x2="0.3" y2="1"><stop offset="0" stop-color="#ffffff" stop-opacity="0.55"/><stop offset="0.45" stop-color="#ffffff" stop-opacity="0.28"/><stop offset="1" stop-color="#ffffff" stop-opacity="0.12"/></linearGradient>
<linearGradient id="btna" x1="0" y1="0" x2="0.3" y2="1"><stop offset="0" stop-color="#ffffff" stop-opacity="0.85"/><stop offset="0.5" stop-color="#ffffff" stop-opacity="0.55"/><stop offset="1" stop-color="#ffffff" stop-opacity="0.35"/></linearGradient>
<radialGradient id="orb" cx="0.5" cy="0.6" r="0.55"><stop offset="0" stop-color="#1aa9e0"/><stop offset="0.6" stop-color="#0a5c9c"/><stop offset="1" stop-color="#083a66"/></radialGradient>
<linearGradient id="glass" x1="0" y1="0" x2="0" y2="1"><stop offset="0" stop-color="#b8cfe0"/><stop offset="1" stop-color="#5f8fb5"/></linearGradient>
<linearGradient id="xblue" x1="0" y1="0" x2="1" y2="0"><stop offset="0" stop-color="#aecdea"/><stop offset="0.5" stop-color="#bcdaf6"/><stop offset="1" stop-color="#b4d3f0"/></linearGradient>
<filter id="bl2"><feGaussianBlur stdDeviation="2"/></filter>
</defs><rect x="0" y="1040" width="1920" height="40" fill="url(#tbg)" /><ellipse cx="1700" cy="1046" rx="110" ry="9" fill="#7a6658" opacity="0.45" filter="url(#bl2)"/><rect x="0" y="1040" width="1920" height="1" fill="#0a0a0a" /><rect x="0" y="1041" width="1920" height="1" fill="#8e8a88" /><rect x="629" y="1040" width="675" height="40" fill="url(#xblue)" /><rect x="629" y="1040" width="675" height="1" fill="#2a3540" /><rect x="629" y="1041" width="675" height="1" fill="#c0d8ee" /><rect x="629" y="1060" width="675" height="20" fill="#bddcfa" opacity="0.6" filter="url(#bl2)"/><g filter="url(#bl2)" opacity="0.55"><rect x="657" y="1050" width="74" height="3" fill="#8e8ad8"/><rect x="734" y="1050" width="63" height="3" fill="#7ea0e0"/><rect x="730" y="1040" width="3" height="14" fill="#8a6ad0"/><rect x="662" y="1042" width="22" height="4" fill="#6a7a9a"/><rect x="776" y="1042" width="17" height="4" fill="#6a7a9a"/><rect x="639" y="1044" width="5" height="5" fill="#7a9ac0"/><rect x="639" y="1062" width="5" height="5" fill="#8aa8cc"/></g><rect x="622" y="1042" width="10" height="38" fill="#3a3030" opacity="0.5" filter="url(#bl2)"/><circle cx="27" cy="1060.3" r="18.3" fill="url(#orb)" stroke="#9a8a80" stroke-width="0.8"/><path d="M11 1058a16 16 0 0 1 32 0q-16 -3 -32 0z" fill="url(#glass)" opacity="0.9"/><path d="M19.5 1050l7 -1.5 -1 8.5 -7.5 1z" fill="#f05a24"/><path d="M28 1052.5l8 -1.5 -1.5 8 -7.5 1z" fill="#7cbb00"/><path d="M17.5 1059l7.5 -0.8 -1 8 -8 1z" fill="#3aa0e8"/><path d="M26.5 1062l7.5 -1 -1.2 7.5 -7.5 1z" fill="#ffb900"/><defs><linearGradient id="ieg" x1="0" y1="0" x2="0" y2="1"><stop offset="0" stop-color="#6fd6fb"/><stop offset="1" stop-color="#1f8ed8"/></linearGradient><linearGradient id="ffg" x1="0" y1="0" x2="0" y2="1"><stop offset="0" stop-color="#f6b31c"/><stop offset="1" stop-color="#e2441a"/></linearGradient><linearGradient id="fgl" x1="0" y1="0" x2="0" y2="1"><stop offset="0" stop-color="#3aa2ea"/><stop offset="1" stop-color="#0b2f7a"/></linearGradient></defs><path d="M101.5 1060A11 11 0 1 0 99.5 1066.5" fill="none" stroke="url(#ieg)" stroke-width="5"/><rect x="83.5" y="1058" width="20" height="3.6" fill="#2ea8ec"/><path d="M77.5 1073.5Q71 1068 82 1054Q95 1040 102.5 1044.5Q105.5 1047 100.5 1053" fill="none" stroke="#f2b600" stroke-width="2.6" stroke-linecap="round"/><path d="M151 1060L138.88 1053.00A14 14 0 0 1 163.12 1053.00Z" fill="#e53b30"/><path d="M151 1060L163.12 1053.00A14 14 0 0 1 151.00 1074.00Z" fill="#fbd000"/><path d="M151 1060L151.00 1074.00A14 14 0 0 1 138.88 1053.00Z" fill="#3cb043"/><circle cx="151" cy="1060" r="6.30" fill="#fff"/><circle cx="151" cy="1060" r="5.04" fill="#4a8fd8"/><circle cx="214.5" cy="1058.5" r="12" fill="url(#fgl)"/><path d="M200.5 1050.5Q197 1058 199 1065Q203 1075 214 1076Q224 1076 228.5 1066Q230 1060 228 1054Q226 1064 217 1067Q208 1069 204.5 1061Q203 1055 207 1051Q209 1049 211 1049Q206 1047 203 1049Z" fill="url(#ffg)"/><path d="M200 1051l1.5-5 3 4z" fill="#f49a1a"/><rect x="246.5" y="1041.5" width="57" height="37" rx="3" fill="url(#btna)" stroke="#f0f0f0" stroke-opacity="0.55"/><rect x="308.5" y="1041.5" width="57" height="37" rx="3" fill="url(#btn)" stroke="#f0f0f0" stroke-opacity="0.55"/><rect x="370.5" y="1041.5" width="57" height="37" rx="3" fill="url(#btn)" stroke="#f0f0f0" stroke-opacity="0.55"/><rect x="432.5" y="1041.5" width="57" height="37" rx="3" fill="url(#btn)" stroke="#f0f0f0" stroke-opacity="0.55"/><rect x="494.5" y="1041.5" width="57" height="37" rx="3" fill="url(#btn)" stroke="#f0f0f0" stroke-opacity="0.55"/><path d="M262.5 1043.5h20l5 5v28h-25z" fill="#fff" stroke="#666"/><rect x="266" y="1051" width="18" height="15" fill="#fff" stroke="#333" stroke-width="0.8"/><rect x="266" y="1051" width="18" height="2.5" fill="#1a3a9a"/><circle cx="270" cy="1059" r="1.5" fill="#e02020"/><circle cx="275" cy="1059" r="1.5" fill="#2050e0"/><circle cx="280" cy="1059" r="1.5" fill="#20a020"/><circle cx="337" cy="1060" r="15" fill="#1ed760"/><path d="M327 1054q10 -3.5 20 1.2M328 1059q9 -3 18 1M329 1064q7.5 -2.2 15 0.8" fill="none" stroke="#111" stroke-width="2.2" stroke-linecap="round"/><path d="M399 1060L386.88 1053.00A14 14 0 0 1 411.12 1053.00Z" fill="#e53b30"/><path d="M399 1060L411.12 1053.00A14 14 0 0 1 399.00 1074.00Z" fill="#fbd000"/><path d="M399 1060L399.00 1074.00A14 14 0 0 1 386.88 1053.00Z" fill="#3cb043"/><circle cx="399" cy="1060" r="6.30" fill="#fff"/><circle cx="399" cy="1060" r="5.04" fill="#4a8fd8"/><path d="M446 1050h8l2 2h14v20h-24z" fill="#f2d98a"/><path d="M446 1055h26v17h-26z" fill="#f8e7a8"/><rect x="449" y="1047" width="3" height="2" fill="#2ab02a"/><rect x="456" y="1049" width="3" height="2" fill="#e03030"/><rect x="464" y="1050" width="3" height="2" fill="#3a8ae0"/><path d="M452 1075v-8h14v8h-3v-5h-8v5z" fill="#7ec8f0"/><rect x="511.5" y="1045.5" width="22" height="30" rx="1.5" fill="#dcecf8" stroke="#4a90c8"/><rect x="514" y="1049" width="17" height="7" fill="#f4f9ff" stroke="#7aa8d0" stroke-width="0.6"/><rect x="514.0" y="1058.0" width="3" height="3" fill="#5aa0d8"/><rect x="518.4" y="1058.0" width="3" height="3" fill="#5aa0d8"/><rect x="522.8" y="1058.0" width="3" height="3" fill="#5aa0d8"/><rect x="527.2" y="1058.0" width="3" height="3" fill="#5aa0d8"/><rect x="514.0" y="1062.2" width="3" height="3" fill="#5aa0d8"/><rect x="518.4" y="1062.2" width="3" height="3" fill="#5aa0d8"/><rect x="522.8" y="1062.2" width="3" height="3" fill="#5aa0d8"/><rect x="527.2" y="1062.2" width="3" height="3" fill="#5aa0d8"/><rect x="514.0" y="1066.4" width="3" height="3" fill="#5aa0d8"/><rect x="518.4" y="1066.4" width="3" height="3" fill="#5aa0d8"/><rect x="522.8" y="1066.4" width="3" height="3" fill="#5aa0d8"/><rect x="527.2" y="1066.4" width="3" height="3" fill="#5aa0d8"/><rect x="514.0" y="1070.6" width="3" height="3" fill="#5aa0d8"/><rect x="518.4" y="1070.6" width="3" height="3" fill="#5aa0d8"/><rect x="522.8" y="1070.6" width="3" height="3" fill="#5aa0d8"/><rect x="527.2" y="1070.6" width="3" height="3" fill="#5aa0d8"/><rect x="528" y="1066" width="3" height="8" fill="#f0a030" /><path d="M1791 1063.5h7.5l-3.75-4.5z" fill="#eef"/><path d="M1811.5 1058.5h2.5l4-4v13l-4-4h-2.5z" fill="#fff"/><path d="M1820 1058.5q1.5 2.5 0 5M1822.5 1056.5q3 4.5 0 9M1825 1055q4 6 0 12" fill="none" stroke="#eee" stroke-width="1"/><text x="1845.3" y="1057.3" textLength="48.9" lengthAdjust="spacingAndGlyphs" font-size="12" fill="#fff" font-weight="400" font-style="normal" >10:20 PM</text><text x="1846.3" y="1074.3" textLength="46.7" lengthAdjust="spacingAndGlyphs" font-size="12" fill="#fff" font-weight="400" font-style="normal" >1/3/2018</text><rect x="1906.5" y="1041.5" width="13" height="37" fill="#3a302c" stroke="#6a625e"/></svg>
</body></html>
